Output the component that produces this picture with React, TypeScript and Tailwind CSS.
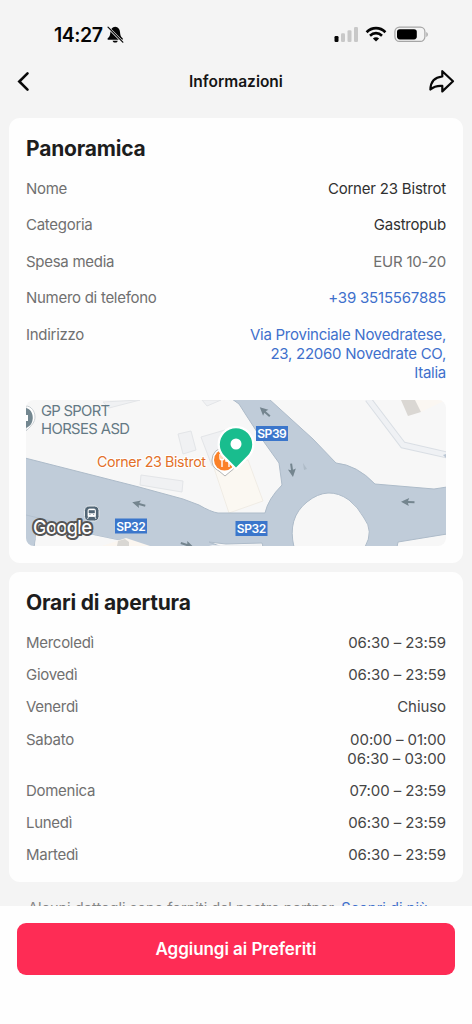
import type { ReactNode } from "react";

const details = [
  { label: "Nome", lines: ["Corner 23 Bistrot"], color: "text-[#303030] tracking-[-0.2px]" },
  { label: "Categoria", lines: ["Gastropub"], color: "text-[#303030] tracking-[-0.2px]" },
  { label: "Spesa media", lines: ["EUR 10-20"], color: "text-[#6f6f6f] tracking-[-0.2px]" },
  { label: "Numero di telefono", lines: ["+39 3515567885"], color: "text-[#3f70cc] tracking-[-0.2px]" },
  {
    label: "Indirizzo",
    lines: ["Via Provinciale Novedratese,", "23, 22060 Novedrate CO,", "Italia"],
    color: "text-[#3f70cc] tracking-[-0.25px]",
  },
];

const hours = [
  { day: "Mercoledì", lines: ["06:30 – 23:59"] },
  { day: "Giovedì", lines: ["06:30 – 23:59"] },
  { day: "Venerdì", lines: ["Chiuso"] },
  { day: "Sabato", lines: ["00:00 – 01:00", "06:30 – 03:00"] },
  { day: "Domenica", lines: ["07:00 – 23:59"] },
  { day: "Lunedì", lines: ["06:30 – 23:59"] },
  { day: "Martedì", lines: ["06:30 – 23:59"] },
];

const BellOff = () => (
  <svg width="17" height="18" viewBox="0 0 17 18">
    <path
      d="M8.200.8C5.200 1 3.600 3.200 3.400 6c-.2 3.200-.8 4.500-2.400 6-.8.8-.5 1.800.5 1.800h13.400c1 0 1.300-1 .5-1.800-1.600-1.500-2.200-2.800-2.400-6C12.800 3.200 11.200 1 8.200.8ZM5.600 14.700c.5 2.500 4.700 2.500 5.200 0Z"
      fill="#050505"
    />
    <path d="M1.300 1.600 15.700 16.200" stroke="#f4f4f4" strokeWidth="2.400" />
    <path d="M1 1.200 15.800 16.200" stroke="#050505" strokeWidth="1.200" strokeLinecap="round" />
  </svg>
);

const StatusBar = () => (
  <div className="flex h-[60px] items-start justify-between pr-[43px] pl-[54px]">
    <div className="mt-[23px] flex items-center gap-[4px]">
      <span className="text-[19.5px] leading-6 font-semibold tracking-[-0.45px] text-[#050505]">
        14:27
      </span>
      <BellOff />
    </div>
    <div className="mt-[26px] flex items-start">
      <svg width="25" height="17" viewBox="0 0 25 17">
        <rect x="0.500" y="10" width="4" height="6" rx="1.200" fill="#050505" />
        <rect x="7" y="7.300" width="4" height="8.700" rx="1.200" fill="#c8c8c8" />
        <rect x="13.500" y="4.200" width="4" height="11.800" rx="1.200" fill="#c8c8c8" />
        <rect x="20" y="1" width="4" height="15" rx="1.200" fill="#c8c8c8" />
      </svg>
      <svg className="ml-[6px]" width="22" height="17" viewBox="0 0 22 17" fill="none" stroke="#050505">
        <path d="M1.600 6.200C7 .8 15 .8 20.400 6.200" strokeWidth="2.700" />
        <path d="M5 9.700c3.500-3.400 8.500-3.400 12 0" strokeWidth="2.600" />
        <path d="M11 15.400 7.900 12.400c1.800-1.600 4.400-1.600 6.200 0Z" fill="#050505" stroke="none" />
      </svg>
      <svg className="ml-[7px]" width="35" height="17" viewBox="0 0 35 17">
        <rect x="0.900" y="1.100" width="30" height="14.300" rx="4.600" fill="none" stroke="#a5a5a5" strokeWidth="1.200" />
        <rect x="3" y="3.200" width="19.800" height="10.200" rx="2.800" fill="#000" />
        <path d="M32.300 6v5c2-.7 2-4.300 0-5Z" fill="#a5a5a5" />
      </svg>
    </div>
  </div>
);

const TopBar = () => (
  <div className="flex h-[58px] items-start justify-between pr-[17px] pl-4">
    <svg className="mt-[11px]" width="28" height="21" viewBox="0 0 28 21">
      <path d="M11.500 2.300 3.300 10.500l8.200 8.200" fill="none" stroke="#080808" strokeWidth="2.600" strokeLinecap="round" />
    </svg>
    <h1 className="mt-[10px] text-[15.500px] leading-6 font-semibold text-[#151515]">Informazioni</h1>
    <svg className="mt-[9px]" width="27" height="25" viewBox="0 0 27 25">
      <path
        d="M14.300 2.200 25 12.300 14.300 22.400V16.900C9.500 16.600 5.600 17.600 2.400 20.500 2.600 12.800 7 8.200 14.300 7.500Z"
        fill="none"
        stroke="#080808"
        strokeWidth="2.200"
        strokeLinejoin="round"
      />
    </svg>
  </div>
);

const RoadSign = ({ x, y, name }: { x: number; y: number; name: string }) => (
  <g>
    <rect x={x} y={y} width="32" height="15" fill="#3b76cb" />
    <text x={x + 16} y={y + 12} textAnchor="middle" fontSize="12" fontWeight="600" fill="#fff" textLength="29.500">
      {name}
    </text>
  </g>
);

const RoadArrow = ({ x, y, angle }: { x: number; y: number; angle: number }) => (
  <g transform={`translate(${x} ${y}) rotate(${angle})`} fill="#74858f">
    <path d="M-7 0 1-4 0-1h6.500v2H0L1 4Z" />
  </g>
);

const MapView = () => (
  <svg
    className="mt-[17.600px] block rounded-lg bg-[#f7f7f7]"
    width="420"
    height="146"
    viewBox="0 0 420 146"
  >
    {/* buildings */}
    <g fill="#f0f1f3" stroke="#e3e5e8" strokeWidth="1">
      <path d="m152 34 13-3 5 19-13 4Z" />
      <path d="m115 75 42 6-1 11-42-7Z" />
      <path d="m175 37 24-7 12 28-25 8Z" />
      <path d="m77 2 6 6 31-8ZM176 0l5 6 14-6Z" />
    </g>
    <path d="m185 59 37 1 15 41-34 12Z" fill="#fbf8f2" stroke="#f0ece5" />
    <path d="m386 0 9 12 25-12Z" fill="#fbf7f2" />
    <path d="m375 0 7 16 13-4-6-12Z" fill="#dad7d3" />
    <path d="m342-1 35 46 44 10" fill="none" stroke="#d9dee4" strokeWidth="7" />
    <path d="m342-1 35 46 44 10" fill="none" stroke="#eff1f4" strokeWidth="5" />
    <path d="m417 55 3-1v4Z" fill="#bac6d3" />

    {/* roads */}
    <path
      d="M-1 58 113 87 157 99 173 105Q185 112 192 113H239Q242 99 256 85L253 63 233 35 220 15 213 4 206-1H243L287 39 310 63Q331 65 349 84L408 89 421 87V134L372 142 371 147H237L236 143 200 144 183 142 196 147H124L67 135 10 124V137L8 147H-1Z"
      fill="#c0ccd9"
      stroke="#adbbc9"
      strokeWidth="1"
    />
    <path d="M9 147 11 124 67 135 125 147Z" fill="#f7f7f7" />
    <path d="M0 115 30 122" stroke="#b3c1cf" />
    <path d="M183 145Q205 146 235 144V147H190Z" fill="#eef0f2" />
    <path d="m76 146 24-8 24 8Z" fill="#fbf6f0" />
    <path d="m91 146 1-5 7-2 4 3v4Z" fill="#d9d7d3" />
    <path
      d="M268 147Q261 118 281 102 302 85 323 100 332 107 338 118 348 131 339 147Z"
      fill="#f7f7f7"
      stroke="#adbbc9"
    />
    <path d="m277 63 4 6-3 1Z" fill="#aebbc7" />

    <RoadArrow x={113} y={104} angle={15} />
    <RoadArrow x={239} y={12} angle={42} />
    <RoadArrow x={266} y={70} angle={-98} />
    <RoadArrow x={382} y={102} angle={3} />
    <RoadArrow x={161} y={145} angle={198} />

    <RoadSign x={89} y={118.5} name="SP32" />
    <RoadSign x={209.5} y={121} name="SP32" />
    <RoadSign x={230} y={26} name="SP39" />

    {/* places */}
    <path d="M0 6c5 0 9 5 9 11 0 5-3 8-9 14Z" fill="#fff" stroke="#c9ced2" />
    <path d="M0 8c9 2 9 17 0 20Z" fill="#738790" />
    <path d="M0 15h2v6H0Z" fill="#fff" />
    <g fill="#647984" fontSize="14.800">
      <text x="15" y="16" textLength="69">GP SPORT</text>
      <text x="15" y="34" textLength="89">HORSES ASD</text>
    </g>
    <text x="71" y="67" fontSize="14.300" fill="#e2712a" stroke="#fff" strokeWidth="2" paintOrder="stroke" textLength="109">
      Corner 23 Bistrot
    </text>
    <path d="M186 60a12.500 12.500 0 0 1 25 0c0 6-3 9-6 11l-6 5-6-5c-4-2-7-5-7-11Z" fill="#fff" stroke="#b5b5b5" strokeWidth="1" />
    <circle cx="198.500" cy="60" r="10.500" fill="#fb8128" />
    <path d="M194 54v4q0 2 2 2t2-2v-4M196 54v13M203 67V54q-3 2-3 7h3" fill="none" stroke="#fff" strokeWidth="1.400" />
    <path
      d="M210 67.500 198.700 56A16.200 16.200 0 1 1 221.300 56Z"
      fill="#19bd8e"
      stroke="#fff"
      strokeWidth="4.500"
      paintOrder="stroke"
      strokeLinejoin="round"
    />
    <circle cx="210" cy="44" r="5.500" fill="#fff" />

    <rect x="58.500" y="106" width="14.500" height="15" rx="4.500" fill="#526676" stroke="#e4e9ed" />
    <path d="M62 110.500q0-1.500 1.500-1.500h4.500q1.500 0 1.500 1.500v6H62Zm.5 6.500-1 2m7.500-2 1 2" fill="#fff" stroke="#fff" strokeWidth=".8" />
    <path d="M63 110.500h5.500v2.500H63Zm.3 4h1.200m2.500 0h1.200" fill="#526676" stroke="#526676" strokeWidth=".6" />
    <text
      x="7"
      y="134"
      fontSize="18.500"
      fontWeight="500"
      fill="#fff"
      stroke="#555"
      strokeWidth="4"
      strokeLinejoin="round"
      paintOrder="stroke"
      textLength="59"
    >
      Google
    </text>
  </svg>
);

const Card = ({ title, children }: { title: string; children: ReactNode }) => (
  <section className="mx-[9px] rounded-[11px] bg-[#fefefe] px-[17px] pt-[17px] pb-[17px]">
    <h2 className="text-[21px] leading-[27px] font-bold tracking-[-0.2px] text-[#1d1d1d]">{title}</h2>
    {children}
  </section>
);

const Row = ({ label, lines, color }: { label: string; lines: string[]; color: string }) => (
  <div className="flex items-start justify-between text-[15px] leading-[19.300px]">
    <span className="tracking-[-0.28px] text-[#707070]">{label}</span>
    <span className={`text-right ${color}`}>
      {lines.map((line) => (
        <span key={line} className="block">
          {line}
        </span>
      ))}
    </span>
  </div>
);

export default function App() {
  return (
    <div className="flex h-[1024px] w-[472px] flex-col overflow-hidden bg-[#f4f4f4] font-['Inter',sans-serif]">
      <StatusBar />
      <TopBar />
      <main className="flex h-[788px] flex-col gap-[9px] overflow-hidden">
        <Card title="Panoramica">
          <div className="mt-[17px] flex flex-col gap-[17.100px]">
            {details.map((d) => (
              <Row key={d.label} {...d} />
            ))}
          </div>
          <MapView />
        </Card>
        <Card title="Orari di apertura">
          <div className="mt-[17px] flex flex-col gap-[12.900px]">
            {hours.map((h) => (
              <Row key={h.day} label={h.day} lines={h.lines} color="text-[#454545] tracking-[-0.08px]" />
            ))}
          </div>
        </Card>
        <p className="mt-[8px] px-[28px] text-[14.600px] leading-[18px] tracking-[-0.02px] whitespace-nowrap text-[#858585]">
          Alcuni dettagli sono forniti dal nostro partner.{" "}
          <span className="text-[#3f70cc]">Scopri di più</span>
        </p>
      </main>
      <footer className="flex h-[118px] items-start bg-[#fefefe] px-[17px] pt-[17px]">
        <button className="h-[52px] w-full rounded-[9px] bg-[#fe2c55] pt-[2px] text-[17px] font-semibold tracking-[-0.05px] text-white">
          Aggiungi ai Preferiti
        </button>
      </footer>
    </div>
  );
}
